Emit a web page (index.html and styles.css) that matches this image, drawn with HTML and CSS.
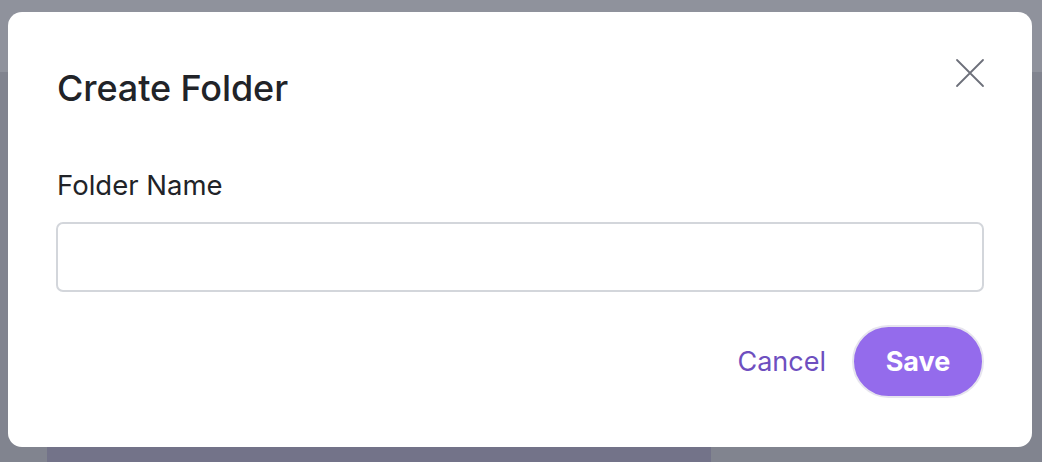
FILE: index.html
```html
<!DOCTYPE html>
<html lang="en">
<head>
<meta charset="utf-8">
<title>Create Folder</title>
<link rel="stylesheet" href="styles.css">
</head>
<body>
<div class="backdrop">
  <div class="page-strip"></div>
  <div class="modal" role="dialog" aria-labelledby="title">
    <div class="modal-head">
      <h2 id="title" class="modal-title">Create Folder</h2>
      <button class="close" aria-label="Close">
        <svg width="30" height="30" viewBox="0 0 30 30"><path d="M2 2L28 28M28 2L2 28" stroke="#6d707a" stroke-width="1.8" stroke-linecap="round" fill="none"/></svg>
      </button>
    </div>
    <label class="field-label" for="name">Folder Name</label>
    <input id="name" class="field-input" type="text">
    <div class="actions">
      <button class="btn-cancel">Cancel</button>
      <button class="btn-save">Save</button>
    </div>
  </div>
</div>
</body>
</html>
```
FILE: styles.css
```css
* { box-sizing: border-box; }
html, body { margin: 0; padding: 0; }
body {
  width: 1042px;
  height: 462px;
  overflow: hidden;
  background: #8f929c;
  font-family: Inter, "Noto Sans", sans-serif;
}
.backdrop {
  position: relative;
  width: 1042px;
  height: 462px;
  padding: 12px 10px 0 8px;
  background: linear-gradient(to bottom, #8f929c 0, #8f929c 72px, #81848f 72px);
}
.page-strip {
  position: absolute;
  left: 47px;
  top: 440px;
  width: 664px;
  height: 22px;
  background: #737389;
}
.modal {
  position: relative;
  width: 1024px;
  height: 435px;
  background: #fff;
  border-radius: 14px;
  padding: 0 48px 0 48px;
  display: flex;
  flex-direction: column;
}
.modal-head {
  display: flex;
  justify-content: space-between;
  align-items: flex-start;
  height: 156px;
  flex: none;
}
.modal-title {
  margin: 54px 0 0 1px;
  font-size: 36px;
  font-weight: 500;
  color: #212328;
  line-height: 44px;
  letter-spacing: -0.1px;
}
.close {
  margin: 46px -1px 0 0;
  padding: 0;
  border: 0;
  background: none;
  width: 30px;
  height: 30px;
  display: flex;
}
.field-label {
  font-size: 27.5px;
  color: #212328;
  line-height: 34px;
  margin-left: 1px;
}
.field-input {
  margin-top: 20px;
  width: 928px;
  height: 70px;
  flex: none;
  border: 2px solid #d3d6db;
  border-radius: 7px;
  background: #fff;
  font: inherit;
  outline: none;
}
.actions {
  display: flex;
  justify-content: flex-end;
  align-items: center;
  gap: 26px;
  margin-top: 33px;
}
.btn-cancel {
  border: 0;
  background: none;
  padding: 0;
  font: inherit;
  font-size: 27px;
  color: #6e4fbf;
}
.btn-save {
  width: 132px;
  height: 73px;
  border-radius: 37px;
  border: 2px solid #e6e4ee;
  background: #946bec;
  color: #fff;
  font: inherit;
  font-size: 27px;
  font-weight: 700;
}
```
